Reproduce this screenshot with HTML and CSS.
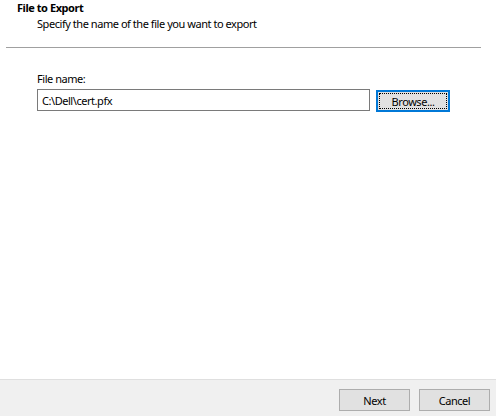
FILE: index.html
```html
<!DOCTYPE html>
<html>
<head>
<meta charset="utf-8">
<link rel="stylesheet" href="styles.css">
</head>
<body>
<div class="wizard">
  <div class="header">
    <div class="title">File to Export</div>
    <div class="subtitle">Specify the name of the file you want to export</div>
  </div>
  <div class="rule"></div>
  <div class="content">
    <label class="label" for="fname">File name:</label>
    <div class="row">
      <input class="field" id="fname" type="text" value="C:\Dell\cert.pfx">
      <button class="btn browse"><span class="focus">Browse...</span></button>
    </div>
  </div>
  <div class="footer">
    <button class="btn">Next</button>
    <button class="btn">Cancel</button>
  </div>
</div>
</body>
</html>
```

FILE: styles.css
```css
html, body {
  margin: 0;
  padding: 0;
  background: #ffffff;
}

.wizard {
  width: 496px;
  height: 416px;
  display: flex;
  flex-direction: column;
  font-family: "Noto Sans", "Open Sans", sans-serif;
  font-size: 11px;
  letter-spacing: -0.45px;
  color: #000000;
}

.header {
  padding: 1px 0 0 17px;
}

.title {
  font-weight: bold;
  line-height: 14px;
}

.subtitle {
  padding-left: 20px;
  margin-top: 1px;
  line-height: 15px;
}

.rule {
  margin: 16px 15px 0 6px;
  height: 1px;
  background: #a0a0a0;
}

.content {
  flex: 1;
  padding: 24px 0 0 37px;
}

.label {
  display: block;
  line-height: 14px;
  margin-bottom: 3px;
}

.row {
  display: flex;
  align-items: flex-start;
  gap: 6px;
}

.field {
  box-sizing: border-box;
  width: 333px;
  height: 22px;
  margin: 0;
  padding: 0 4px;
  border: 1px solid #7a7a7a;
  font: inherit;
  letter-spacing: inherit;
  color: #000000;
  background: #ffffff;
  outline: none;
}

.btn {
  box-sizing: border-box;
  width: 71px;
  height: 22px;
  margin: 0;
  padding: 0;
  border: 1px solid #adadad;
  background: #e1e1e1;
  font: inherit;
  letter-spacing: inherit;
  color: #000000;
}

.browse {
  width: 74px;
  margin-top: 1px;
  border: 2px solid #0078d7;
  padding: 1px;
}

.focus {
  display: flex;
  align-items: center;
  justify-content: center;
  height: 100%;
  box-sizing: border-box;
  border: 1px dotted #000000;
}

.footer {
  height: 37px;
  box-sizing: border-box;
  border-top: 1px solid #dfdfdf;
  background: #f0f0f0;
  display: flex;
  justify-content: flex-end;
  align-items: flex-start;
  gap: 9px;
  padding: 9px 6px 0 0;
}
```
